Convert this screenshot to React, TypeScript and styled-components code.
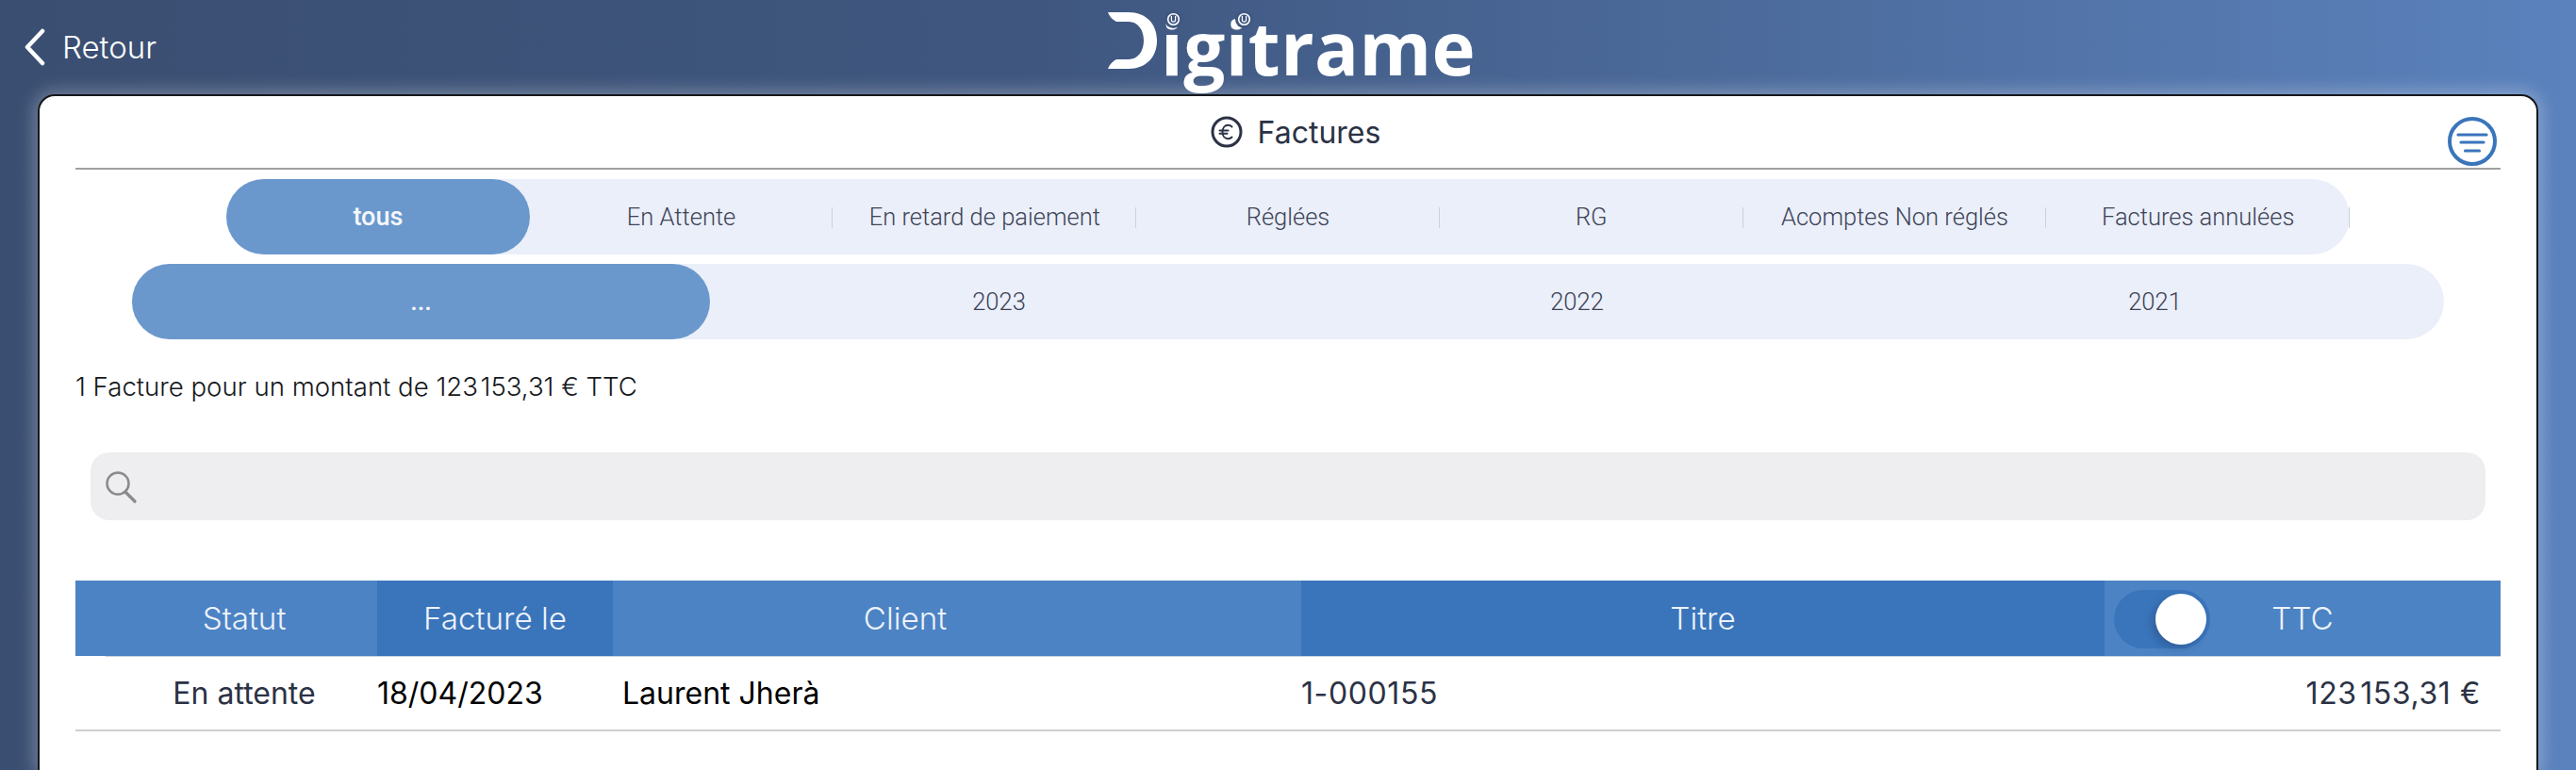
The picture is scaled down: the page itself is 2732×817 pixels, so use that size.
import React from "react";
import styled, { createGlobalStyle } from "styled-components";

const Global = createGlobalStyle`
  html, body { margin: 0; padding: 0; background: #3b4f72; }
  body { width: 2732px; height: 817px; overflow: hidden; font-family: Inter, "Liberation Sans", sans-serif; }
`;

const Page = styled.div`
  width: 2732px;
  height: 817px;
  overflow: hidden;
  display: flex;
  flex-direction: column;
  background: linear-gradient(90deg, #3a4e71 0%, #3f577f 40%, #5b82bd 100%);
`;

const TopBar = styled.header`
  height: 100px;
  flex: none;
  display: grid;
  grid-template-columns: 1fr auto 1fr;
  align-items: start;
`;

const Back = styled.div`
  display: flex;
  align-items: center;
  gap: 18px;
  height: 100px;
  padding-left: 26px;
  color: #fff;
  font-size: 33px;
  font-weight: 300;
`;

const Logo = styled.div`
  position: relative;
  box-sizing: border-box;
  width: 420px;
  height: 100px;
  padding: 12px 0 0 19px;
  display: flex;
  align-items: flex-start;
  color: #fff;
`;

const LogoD = styled.svg`
  width: 52px;
  height: 62px;
  flex: none;
`;

const LogoWord = styled.span`
  font-family: "Open Sans", sans-serif;
  font-weight: 700;
  font-size: 78px;
  line-height: 96px;
  letter-spacing: 0.4px;
  margin: -10px 0 0 4px;
  white-space: nowrap;
`;

const LogoDot = styled.svg<{ $x: number }>`
  position: absolute;
  left: ${(p) => p.$x}px;
  top: 11px;
  width: 19px;
  height: 19px;
`;

const Card = styled.main`
  margin: 0 40px 0 40px;
  flex: 1;
  background: #fff;
  border: 2px solid #16181c;
  border-bottom: none;
  border-radius: 18px 18px 0 0;
  box-shadow: 0 0 18px 4px rgba(255, 255, 255, 0.28);
  padding: 0 38px;
  display: flex;
  flex-direction: column;
`;

const TitleRow = styled.div`
  position: relative;
  height: 76px;
  flex: none;
  border-bottom: 2px solid #a0a0a2;
  display: flex;
  align-items: center;
  justify-content: center;
  gap: 16px;
  color: #2b3245;
  font-size: 32px;
  font-weight: 400;
  padding-left: 16px;
`;

const FilterIcon = styled.svg`
  position: absolute;
  right: 4px;
  top: 22px;
  width: 52px;
  height: 52px;
`;

const SegmentRow = styled.div<{ $inset: number }>`
  margin: 10px ${(p) => p.$inset}px 0;
  height: 80px;
  flex: none;
  display: flex;
  border-radius: 40px;
  background: #eaeff9;
`;

const Segment = styled.div<{ $active?: boolean; $divider?: boolean }>`
  position: relative;
  flex: 1 1 0;
  min-width: 0;
  display: flex;
  align-items: center;
  justify-content: center;
  white-space: nowrap;
  border-radius: 40px;
  font-family: Roboto, "Liberation Sans", Arial, sans-serif;
  font-size: ${(p) => (p.$active ? 27 : 25.5)}px;
  color: ${(p) => (p.$active ? "#f4f7fb" : "#3e4357")};
  background: ${(p) => (p.$active ? "#6a98cd" : "transparent")};
  font-weight: ${(p) => (p.$active ? 500 : 300)};
  &::after {
    content: "";
    display: ${(p) => (p.$divider ? "block" : "none")};
    position: absolute;
    right: 0;
    top: 30px;
    height: 22px;
    width: 1px;
    background: #cdd1da;
  }
`;

const Summary = styled.div`
  margin-top: 34px;
  font-size: 27.6px;
  line-height: 32px;
  font-weight: 300;
  color: #16181c;
  flex: none;
`;

const Search = styled.div`
  margin: 54px 16px 0;
  height: 72px;
  flex: none;
  display: flex;
  align-items: center;
  padding-left: 16px;
  border-radius: 20px;
  background: #eeeef0;
`;

const HeaderRow = styled.div`
  position: relative;
  margin-top: 64px;
  display: grid;
  grid-template-columns: 320px 250px 730px 852px 420px;
  height: 80px;
  flex: none;
  padding-bottom: 1px;
  &::after {
    content: "";
    position: absolute;
    left: 32px;
    right: 0;
    bottom: 0;
    height: 1px;
    background: #c8d3e2;
  }
`;

const HeaderCell = styled.div<{ $dark?: boolean; $pad?: string }>`
  position: relative;
  display: flex;
  align-items: center;
  justify-content: center;
  color: #edf2fa;
  font-size: 33.2px;
  font-weight: 300;
  padding: ${(p) => p.$pad || 0};
  background: ${(p) => (p.$dark ? "#3a75bb" : "#4c83c4")};
`;

const Toggle = styled.div`
  position: absolute;
  left: 10px;
  top: 10px;
  width: 102px;
  height: 62px;
  border-radius: 31px;
  background: #3a75bb;
`;

const Thumb = styled.div`
  position: absolute;
  right: 4px;
  top: 4px;
  width: 54px;
  height: 54px;
  border-radius: 50%;
  background: #fff;
  box-shadow: -4px 4px 8px rgba(30, 50, 90, 0.3);
`;

const DataRow = styled.div`
  display: grid;
  grid-template-columns: 320px 250px 730px 852px 420px;
  height: 77px;
  flex: none;
  align-items: center;
  border-bottom: 2px solid #cfcfd1;
  font-size: 32px;
  font-weight: 400;
`;

const DataCell = styled.div<{ $align?: string; $pad?: string; $color?: string; $track?: number }>`
  white-space: nowrap;
  text-align: ${(p) => p.$align || "left"};
  padding: ${(p) => p.$pad || 0};
  color: ${(p) => p.$color || "#2b3245"};
  letter-spacing: ${(p) => p.$track || 0}px;
`;

const tabs = ["tous", "En Attente", "En retard de paiement", "Réglées", "RG", "Acomptes Non réglés", "Factures annulées"];
const years = ["...", "2023", "2022", "2021"];

const Dot = ({ x }: { x: number }) => (
  <LogoDot $x={x} viewBox="0 0 19 19">
    <circle cx="9.5" cy="9.5" r="9.500" fill="#405880" />
    <circle cx="9.5" cy="9.5" r="5.8" fill="none" stroke="#fff" strokeWidth="1.6" />
    <path d="M7.4 6v4a2.100 2.100 0 0 0 4.200 0V6" fill="none" stroke="#fff" strokeWidth="1.2" />
  </LogoDot>
);

export default function App() {
  return (
    <Page>
      <Global />
      <TopBar>
        <Back>
          <svg width="22" height="40" viewBox="0 0 22 40" fill="none">
            <path d="M19 3 3 20l16 17" stroke="#fff" strokeWidth="4.500" strokeLinecap="round" strokeLinejoin="round" />
          </svg>
          Retour
        </Back>
        <Logo>
          <LogoD viewBox="0 0 52 62">
            <path
              d="M0 1h22c18 0 30 12 30 30S40 61 22 61H0c2-5 5-8 9-10h13c10 0 16-9 16-20S32 11 22 11H9C5 9 2 6 0 1Z"
              fill="#fff"
            />
          </LogoD>
          <LogoWord>igitrame</LogoWord>
          <Dot x={79} />
          <Dot x={154} />
        </Logo>
        <div />
      </TopBar>
      <Card>
        <TitleRow>
          <svg width="34" height="34" viewBox="0 0 34 34" fill="none">
            <circle cx="17" cy="17" r="15" stroke="#2b3245" strokeWidth="3" />
            <path d="M22.500 11.500c-1-1-2.500-1.700-4-1.700-3.500 0-6 3-6 7.200s2.500 7.200 6 7.200c1.500 0 3-.7 4-1.700M9.500 15.500h9M9.500 18.700h8" stroke="#2b3245" strokeWidth="2" strokeLinecap="round" />
          </svg>
          Factures
          <FilterIcon viewBox="0 0 52 52" fill="none">
            <circle cx="26" cy="26" r="24" stroke="#3a75bb" strokeWidth="4" />
            <path d="M11 19h30M14 27h24M18.500 36h15" stroke="#3a75bb" strokeWidth="3.200" strokeLinecap="round" />
          </FilterIcon>
        </TitleRow>
        <SegmentRow $inset={160}>
          {tabs.map((t, i) => (
            <Segment key={t} $active={i === 0} $divider={i > 0}>
              {t}
            </Segment>
          ))}
        </SegmentRow>
        <SegmentRow $inset={60}>
          {years.map((t, i) => (
            <Segment key={t} $active={i === 0}>
              {t}
            </Segment>
          ))}
        </SegmentRow>
        <Summary>1 Facture pour un montant de 123{"\u200a"}153,31 € TTC</Summary>
        <Search>
          <svg width="34" height="36" viewBox="0 0 34 36" fill="none">
            <circle cx="13" cy="15" r="11.500" stroke="#8a8a8e" strokeWidth="2.500" />
            <path d="m21 24 10 10" stroke="#8a8a8e" strokeWidth="3.200" strokeLinecap="round" />
          </svg>
        </Search>
        <HeaderRow>
          <HeaderCell $pad="0 0 0 38px">Statut</HeaderCell>
          <HeaderCell $dark>Facturé le</HeaderCell>
          <HeaderCell $pad="0 110px 0 0">Client</HeaderCell>
          <HeaderCell $dark>Titre</HeaderCell>
          <HeaderCell>
            <Toggle>
              <Thumb />
            </Toggle>
            TTC
          </HeaderCell>
        </HeaderRow>
        <DataRow>
          <DataCell $align="center" $pad="0 0 0 38px">En attente</DataCell>
          <DataCell $color="#000">18/04/2023</DataCell>
          <DataCell $color="#000" $pad="0 0 0 10px">Laurent Jherà</DataCell>
          <DataCell $track={0.6}>1-000155</DataCell>
          <DataCell $align="right" $pad="0 21px 0 0" $track={0.6}>123{"\u200a"}153,31 €</DataCell>
        </DataRow>
      </Card>
    </Page>
  );
}
